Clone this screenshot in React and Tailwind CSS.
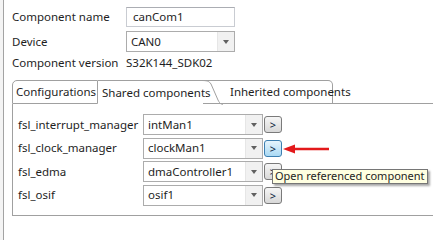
import React from 'react';

const font = { fontFamily: '"Noto Sans", "Segoe UI", sans-serif' };

function Combo({ value, className = '' }) {
  return (
    <div className={`flex h-full border border-[#acacac] bg-white ${className}`}>
      <div className="flex-1 flex items-center pl-[4px] text-[#1e1e1e] overflow-hidden whitespace-nowrap">{value}</div>
      <div className="w-[17px] flex items-center justify-center bg-[#f1f1f1] border-l border-[#e6e6e6]">
        <div className="w-0 h-0 border-l-[3.5px] border-r-[3.5px] border-t-[4px] border-l-transparent border-r-transparent border-t-[#606060]" />
      </div>
    </div>
  );
}

function OpenButton({ active }) {
  return (
    <div
      className={`w-[18px] h-[17px] flex items-center justify-center rounded-[3px] border text-[11px] leading-none ${
        active
          ? 'border-[#3c7fb1] bg-gradient-to-b from-[#e5f4fc] to-[#a9d9f4] text-[#0b1d3a]'
          : 'border-[#7a7a7a] bg-gradient-to-b from-[#f6f6f6] to-[#d8d8d8] text-[#0b1d3a]'
      }`}
    >
      &gt;
    </div>
  );
}

const refs = [
  { name: 'fsl_interrupt_manager', value: 'intMan1' },
  { name: 'fsl_clock_manager', value: 'clockMan1', active: true },
  { name: 'fsl_edma', value: 'dmaController1' },
  { name: 'fsl_osif', value: 'osif1' },
];

export default function App() {
  return (
    <div className="relative w-[433px] h-[240px] bg-white text-[11.5px] text-[#1e1e1e] overflow-hidden flex" style={font}>
      {/* left sash */}
      <div className="w-[4px] shrink-0 border-r border-[#a3a3a3] bg-[#f4f4f4]" />

      <div className="flex-1 pl-[8px] pt-[7px]">
        <div className="flex items-center h-[20px]">
          <span className="w-[114px]">Component name</span>
          <div className="w-[109px] h-full border border-[#c9ccd2] border-t-[#abadb3] flex items-center pl-[6px]">canCom1</div>
        </div>
        <div className="flex items-center h-[21px] mt-[4px]">
          <span className="w-[114px]">Device</span>
          <Combo value="CAN0" className="w-[109px]" />
        </div>
        <div className="flex items-center h-[18px] mt-[2px]">
          <span className="w-[114px]">Component version</span>
          <span>S32K144_SDK02</span>
        </div>

        {/* tabs */}
        <div className="mt-[8px] flex h-[24px] items-end whitespace-nowrap">
          <div className="h-[24px] w-[86px] shrink-0 flex items-center pl-[3px] border border-[#a0a0a0] rounded-tl-[5px] bg-white">
            Configurations
          </div>
          <div className="relative h-[24px] w-[105px] shrink-0 flex items-center pl-[4px] border-t border-[#a0a0a0] bg-white">
            Shared components
            <svg className="absolute right-[-20px] top-[-1px]" width="22" height="25" viewBox="0 0 22 25">
              <path d="M0 0.5 C6 0.5 8 1 10 4 L17 20 C19 24 20 24 22 24.5" fill="none" stroke="#a0a0a0" />
            </svg>
          </div>
          <div className="h-[24px] w-[130px] shrink-0 flex items-center pl-[27px] border-t border-b border-r border-[#a0a0a0] rounded-tr-[5px]">
            Inherited components
          </div>
          <div className="h-[24px] flex-1 border-b border-[#a0a0a0]" />
        </div>

        {/* panel */}
        <div className="h-[112px] border border-r-0 border-t-0 border-[#a0a0a0] pl-[5px] pt-[10px]">
          <div className="flex flex-col gap-[2.5px]">
            {refs.map((r) => (
              <div key={r.name} className="flex items-center h-[21px]">
                <span className="w-[125px]">{r.name}</span>
                <Combo value={r.value} className="w-[120px]" />
                <div className="ml-[1px]">
                  <OpenButton active={r.active} />
                </div>
              </div>
            ))}
          </div>
        </div>
      </div>

      {/* red arrow pointing at the button */}
      <svg className="absolute left-[283px] top-[144px]" width="48" height="10" viewBox="0 0 48 10">
        <path d="M10 5 L46 5" stroke="#e3191b" strokeWidth="2.5" />
        <path d="M0 5 L12 0.5 L12 9.5 Z" fill="#e3191b" />
      </svg>

      {/* tooltip */}
      <div className="absolute left-[272px] top-[169px] h-[15px] px-[2px] flex items-center whitespace-nowrap border border-[#767676] bg-[#ffffe1] text-[11px] shadow-[2px_2px_2px_rgba(0,0,0,0.35)]">
        Open referenced component
      </div>
    </div>
  );
}
